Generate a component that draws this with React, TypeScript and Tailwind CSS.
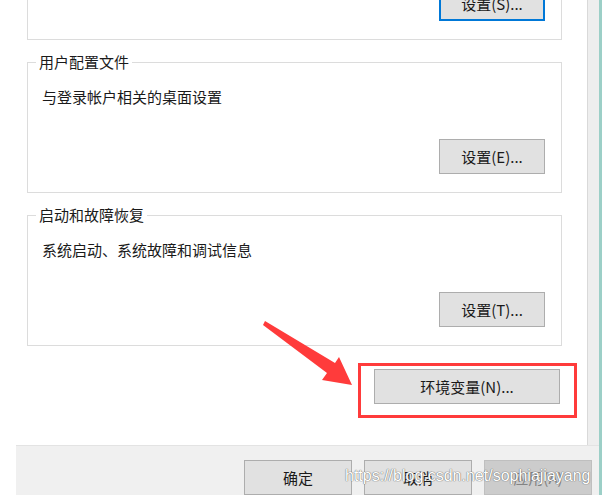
import React from 'react';

const font = "font-['Noto_Sans_CJK_SC','Microsoft_YaHei',sans-serif]";

function WinButton({ children, focused, disabled, className = '' }: { children: React.ReactNode; focused?: boolean; disabled?: boolean; className?: string }) {
    const look = disabled
        ? 'bg-[#cccccc] border border-[#bfbfbf] text-[#838383]'
        : focused
            ? 'bg-[#e1e1e1] border-2 border-[#0078d7] text-[#1a1a1a]'
            : 'bg-[#e1e1e1] border border-[#adadad] text-[#1a1a1a]';
    return (
        <button type="button" className={`h-[35px] flex items-center justify-center text-[15px] leading-[20px] ${look} ${className}`}>
            {children}
        </button>
    );
}

function GroupBox({ title, text, button, focused, className = '' }: { title?: string; text?: string; button: string; focused?: boolean; className?: string }) {
    return (
        <div className={`relative ml-[27px] w-[535px] h-[131px] border border-[#dcdcdc] pl-[14px] pr-[16px] pt-[24px] ${className}`}>
            {title && (
                <span className="absolute left-[8px] -top-[11px] px-[3px] bg-white text-[15px] leading-[20px] text-[#1a1a1a]">{title}</span>
            )}
            <p className="h-[20px] text-[15px] leading-[20px] text-[#1a1a1a]">{text}</p>
            <div className="mt-[32px] flex justify-end">
                <WinButton focused={focused} className="w-[106px]">{button}</WinButton>
            </div>
        </div>
    );
}

export default function App() {
    return (
        <div className={`relative w-[602px] h-[495px] overflow-hidden bg-white flex ${font}`}>
            <div className="flex flex-col w-[599px]">
                <div className="flex h-[448px]">
                    <div className="w-[588px] bg-white border-r border-[#d9d9d9]">
                        <GroupBox className="-mt-[91px]" button="设置(S)..." focused />
                        <GroupBox className="mt-[22px]" title="用户配置文件" text="与登录帐户相关的桌面设置" button="设置(E)..." />
                        <GroupBox className="mt-[22px] h-[130px]" title="启动和故障恢复" text="系统启动、系统故障和调试信息" button="设置(T)..." />
                        <div className="mt-[23px] flex justify-end pr-[27px]">
                            <WinButton className="w-[186px]">环境变量(N)...</WinButton>
                        </div>
                    </div>
                    <div className="flex-1 bg-[#eeeeee]" />
                </div>
                <div className="flex flex-1">
                    <div className="w-[16px] bg-white" />
                    <div className="flex-1 bg-[#f0f0f0] border-t border-[#e3e3e3] pl-[228px] pt-[14px] flex gap-[12px]">
                        <WinButton className="w-[108px]">确定</WinButton>
                        <WinButton className="w-[108px]">取消</WinButton>
                        <WinButton disabled className="w-[108px]">应用(A)</WinButton>
                    </div>
                </div>
            </div>
            <div className="w-[3px] bg-[#9ccfc7]" />

            {/* annotation: red frame + arrow */}
            <div className="absolute left-[358px] top-[363px] w-[219px] h-[55px] border-[3px] border-[#ff3b3b]" />
            <svg className="absolute inset-0 pointer-events-none" width="602" height="495" viewBox="0 0 602 495">
                <polygon points="265,321 335,363 339,357 352,385 322,380 327,373 263,325" fill="#ff3b3b" />
            </svg>

            {/* watermark */}
            <span className="absolute left-[345px] top-[465px] text-[16px] leading-[22px] text-white font-['Liberation_Sans',Arial,sans-serif] [text-shadow:0_0_1px_#666,0_0_1px_#666]">
                https://blog.csdn.net/sophiajiayang
            </span>
        </div>
    );
}
